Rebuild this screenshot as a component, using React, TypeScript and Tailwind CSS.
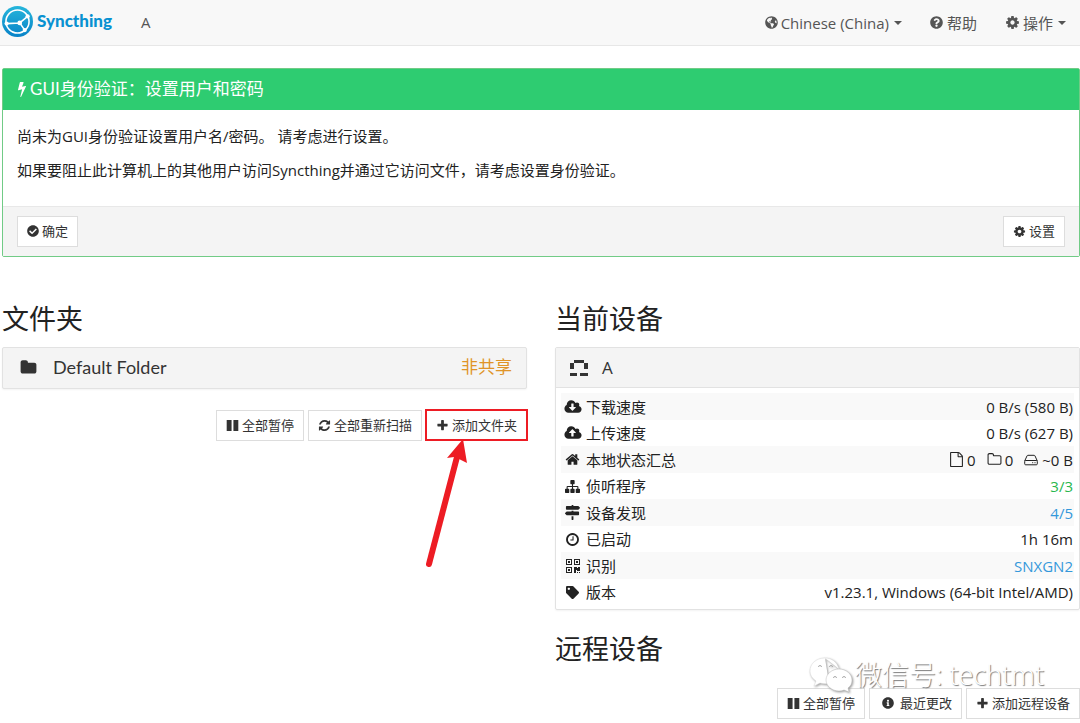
import type { ReactNode } from "react";
import {
  FaCheckCircle,
  FaGlobeAmericas,
  FaInfoCircle,
  FaMapSigns,
  FaQuestionCircle,
  FaTag,
} from "react-icons/fa";

const paths = {
  bolt: "M1333 566q18 20 7 44l-540 1157q-13 25-42 25-4 0-14-2-17-5-25.5-19t-4.5-30l197-808-406 101q-4 1-12 1-18 0-31-11-18-15-13-39l201-825q4-16 18-26t32-10h328q19 0 32 12.5t13 29.5q0 8-5 18l-171 463 396-98q8-2 12-2 19 0 34 15z",
  cog: "M1152 896q0-106-75-181t-181-75-181 75-75 181 75 181 181 75 181-75 75-181zm512-109v222q0 12-8 23t-20 13l-185 28q-19 54-39 91 35 50 107 138 10 12 10 25t-9 23q-27 37-99 108t-94 71q-12 0-26-9l-138-108q-44 23-91 38-16 136-29 186-7 28-36 28h-222q-14 0-24.5-8.5t-11.5-21.5l-28-184q-49-16-90-37l-141 107q-10 9-25 9-14 0-25-11-126-114-165-168-7-10-7-23 0-12 8-23 15-21 51-66.5t54-70.5q-27-50-41-99l-183-27q-13-2-21-12.5t-8-23.5v-222q0-12 8-23t19-13l186-28q14-46 39-92-40-57-107-138-10-12-10-24 0-10 9-23 26-36 98.5-107.5t94.5-71.5q13 0 26 10l138 107q44-23 91-38 16-136 29-186 7-28 36-28h222q14 0 24.5 8.5t11.5 21.5l28 184q49 16 90 37l142-107q9-9 24-9 13 0 25 10 129 119 165 170 7 8 7 22 0 12-8 23-15 21-51 66.5t-54 70.5q26 50 41 98l183 28q13 2 21 12.5t8 23.5z",
  refresh:
    "M1639 1056q0 5-1 7-64 268-268 434.5t-478 166.5q-146 0-282.5-55t-243.5-157l-129 129q-19 19-45 19t-45-19-19-45v-448q0-26 19-45t45-19h448q26 0 45 19t19 45-19 45l-137 137q71 66 161 102t187 36q134 0 250-65t186-179q11-17 53-117 8-23 30-23h192q13 0 22.5 9.5t9.5 22.5zm25-800v448q0 26-19 45t-45 19h-448q-26 0-45-19t-19-45 19-45l138-138q-148-137-349-137-134 0-250 65t-186 179q-11 17-53 117-8 23-30 23h-199q-13 0-22.5-9.5t-9.5-22.5v-7q65-268 270-434.5t480-166.5q146 0 284 55.5t245 156.5l130-129q19-19 45-19t45 19 19 45z",
  folder:
    "M1728 608v704q0 92-66 158t-158 66h-1216q-92 0-158-66t-66-158v-960q0-92 66-158t158-66h320q92 0 158 66t66 158v32h672q92 0 158 66t66 158z",
  folderOutline:
    "M1600 1312v-704q0-40-28-68t-68-28h-704q-40 0-68-28t-28-68v-64q0-40-28-68t-68-28h-320q-40 0-68 28t-28 68v960q0 40 28 68t68 28h1216q40 0 68-28t28-68zm128-704v704q0 92-66 158t-158 66h-1216q-92 0-158-66t-66-158v-960q0-92 66-158t158-66h320q92 0 158 66t66 158v32h672q92 0 158 66t66 158z",
  file: "M1596 380q28 28 48 76t20 88v1152q0 40-28 68t-68 28h-1344q-40 0-68-28t-28-68v-1600q0-40 28-68t68-28h896q40 0 88 20t76 48zm-444-244v376h376q-10-29-22-41l-313-313q-12-12-41-22zm384 1528v-1024h-416q-40 0-68-28t-28-68v-416h-768v1536h1280z",
  clock:
    "M1024 544v448q0 14-9 23t-23 9h-320q-14 0-23-9t-9-23v-64q0-14 9-23t23-9h224v-352q0-14 9-23t23-9h64q14 0 23 9t9 23zm416 352q0-148-73-273t-198-198-273-73-273 73-198 198-73 273 73 273 198 198 273 73 273-73 198-198 73-273zm224 0q0 209-103 385.5t-279.5 279.5-385.5 103-385.5-103-279.5-279.5-103-385.5 103-385.5 279.5-279.5 385.5-103 385.5 103 279.5 279.5 103 385.5z",
  plus: "M1600 736v192q0 40-28 68t-68 28h-416v416q0 40-28 68t-68 28h-192q-40 0-68-28t-28-68v-416h-416q-40 0-68-28t-28-68v-192q0-40 28-68t68-28h416v-416q0-40 28-68t68-28h192q40 0 68 28t28 68v416h416q40 0 68 28t28 68z",
  pause: "M96 128h672v1536h-672zM1024 128h672v1536h-672z",
  home: "M1472 992v480q0 26-19 45t-45 19h-384v-384h-256v384h-384q-26 0-45-19t-19-45v-480q0-1 .5-3t.5-3l575-474 575 474q1 2 1 6zm223-69l-62 74q-8 9-21 11h-3q-13 0-21-7l-692-577-692 577q-12 8-24 7-13-2-21-11l-62-74q-8-10-7-23.5t11-21.5l719-599q32-26 76-26t76 26l244 204v-195q0-14 9-23t23-9h192q14 0 23 9t9 23v408l219 182q10 8 11 21.5t-7 23.5z",
  sitemap:
    "M1792 1248v320q0 40-28 68t-68 28h-320q-40 0-68-28t-28-68v-320q0-40 28-68t68-28h96v-192h-512v192h96q40 0 68 28t28 68v320q0 40-28 68t-68 28h-320q-40 0-68-28t-28-68v-320q0-40 28-68t68-28h96v-192h-512v192h96q40 0 68 28t28 68v320q0 40-28 68t-68 28h-320q-40 0-68-28t-28-68v-320q0-40 28-68t68-28h96v-192q0-52 38-90t90-38h512v-192h-96q-40 0-68-28t-28-68v-320q0-40 28-68t68-28h320q40 0 68 28t28 68v320q0 40-28 68t-68 28h-96v192h512q52 0 90 38t38 90v192h96q40 0 68 28t28 68z",
  download:
    "M1216 928q0-14-9-23t-23-9h-224v-352q0-13-9.5-22.5t-22.5-9.5h-192q-13 0-22.5 9.5t-9.5 22.5v352h-224q-13 0-22.5 9.5t-9.5 22.5q0 14 9 23l352 352q9 9 23 9t23-9l351-351q10-12 10-24zm640 224q0 159-112.5 271.5t-271.5 112.5h-1088q-185 0-316.5-131.5t-131.5-316.5q0-130 70-240t188-165q-2-30-2-43 0-212 150-362t362-150q156 0 285.5 87t188.5 231q71-62 166-62 106 0 181 75t75 181q0 76-41 138 130 31 213.5 135.5t83.5 238.5z",
  upload:
    "M1216 864q0-14-9-23l-352-352q-9-9-23-9t-23 9l-351 351q-10 12-10 24 0 14 9 23t23 9h224v352q0 13 9.5 22.5t22.5 9.5h192q13 0 22.5-9.5t9.5-22.5v-352h224q13 0 22.5-9.5t9.5-22.5zm640 288q0 159-112.5 271.5t-271.5 112.5h-1088q-185 0-316.5-131.5t-131.5-316.5q0-130 70-240t188-165q-2-30-2-43 0-212 150-362t362-150q156 0 285.5 87t188.5 231q71-62 166-62 106 0 181 75t75 181q0 76-41 138 130 31 213.5 135.5t83.5 238.5z",
};

interface IconProps {
  name: keyof typeof paths;
  className?: string;
}

const Icon = ({ name, className = "size-[13px]" }: IconProps) => (
  <svg
    viewBox="0 0 1792 1792"
    fill="currentColor"
    overflow="visible"
    className={`shrink-0 ${className}`}
    aria-hidden="true"
  >
    <path d={paths[name]} />
  </svg>
);

const QrIcon = () => (
  <svg viewBox="0 0 14 14" className="size-[14px]" fill="currentColor" aria-hidden="true">
    <path
      fillRule="evenodd"
      d="M0 0h6v6H0zM1 1v4h4V1zM8 0h6v6H8zM9 1v4h4V1zM0 8h6v6H0zM1 9v4h4V9z"
    />
    <path d="M2 2h2v2H2zM10 2h2v2h-2zM2 10h2v2H2zM8 8h3v1h1V8h2v4h-3v-1h-1v3H8zM11 13h1v1h-1zM13 13h1v1h-1z" />
  </svg>
);

const DriveIcon = () => (
  <svg
    viewBox="0 0 14 14"
    className="size-[14px]"
    fill="none"
    stroke="currentColor"
    strokeLinejoin="round"
    aria-hidden="true"
  >
    <path d="M.7 8 3 2.9q.3-.6 1-.6h6q.7 0 1 .6L13.3 8M1.7 7.5h10.6q1 0 1 1v2.300q0 1-1 1H1.700q-1 0-1-1V8.500q0-1 1-1z" />
    <path d="M8.200 9.700h1M10.500 9.700h1" />
  </svg>
);

const Identicon = () => (
  <svg viewBox="0 0 18 18" className="size-[18px]" fill="currentColor" aria-hidden="true">
    <path d="M4 1h10v3H4zM0 4h4v6H0zM14 4h4v6h-4zM0 14h7v3H0zM10 14h8v3h-8z" />
  </svg>
);

const Logo = () => (
  <svg viewBox="0 0 118 118" className="size-[31px]" aria-hidden="true">
    <defs>
      <linearGradient id="logo" x1="0" y1="1" x2="0" y2="0">
        <stop offset="0" stopColor="#0882c8" />
        <stop offset="1" stopColor="#26b6db" />
      </linearGradient>
    </defs>
    <circle cx="59" cy="59" r="59" fill="url(#logo)" />
    <g fill="none" stroke="#fff" strokeWidth="6">
      <circle cx="59" cy="59" r="44" />
      <path d="M97.600 39.400 67.500 64.400 86.500 91.800M67.500 64.400 17.500 67" />
    </g>
    <g fill="#fff">
      <circle cx="97.600" cy="39.400" r="8" />
      <circle cx="86.500" cy="91.800" r="8" />
      <circle cx="17.500" cy="67" r="8" />
      <circle cx="67.500" cy="64.400" r="9" />
    </g>
  </svg>
);

const Caret = () => (
  <span className="ml-0.5 border-x-4 border-t-4 border-x-transparent border-t-current" />
);

interface ButtonProps {
  icon: ReactNode;
  children: ReactNode;
}

const Button = ({ icon, children }: ButtonProps) => (
  <button
    type="button"
    className="flex h-[31px] items-center gap-[3px] border border-[#ddd] bg-white px-[9px] pb-px text-[13px] whitespace-nowrap text-[#333]"
  >
    {icon}
    {children}
  </button>
);

interface RowProps {
  icon: ReactNode;
  label: string;
  children: ReactNode;
}

const Row = ({ icon, label, children }: RowProps) => (
  <tr className="odd:h-[27px] odd:bg-[#f9f9f9] even:h-[26px]">
    <th scope="row" className="pl-[3px] text-left font-normal">
      <span className="flex items-center gap-[5px]">
        <span className="flex w-[17px] justify-center">{icon}</span>
        {label}
      </span>
    </th>
    <td className="pr-px text-right">{children}</td>
  </tr>
);

const Navbar = () => (
  <nav className="flex h-[46px] items-center justify-between border-b border-[#e7e7e7] bg-[#f8f8f8] pr-[14px] pl-0.5 text-[#555]">
    <div className="flex items-center pb-[3px]">
      <a
        href="#"
        className="flex items-center gap-1 font-[Lato,sans-serif] text-[17px] font-black text-[#0891d1]"
      >
        <Logo />
        Syncthing
      </a>
      <span className="ml-[29px] pt-0.5">A</span>
    </div>
    <div className="flex items-center gap-7">
      <button type="button" className="flex items-center gap-[3px]">
        <FaGlobeAmericas className="size-[13px]" />
        Chinese (China)
        <Caret />
      </button>
      <a href="#help" className="flex items-center gap-1">
        <FaQuestionCircle className="size-[13px]" />
        帮助
      </a>
      <button type="button" className="flex items-center gap-[3px]">
        <Icon name="cog" className="size-[15px]" />
        操作
        <Caret />
      </button>
    </div>
  </nav>
);

const AuthNotice = () => (
  <section className="mt-[22px] rounded-xs border border-[#71cb86]">
    <h3 className="flex h-[41px] items-center bg-[#2ecc71] px-[11px] pb-0.5 font-[Lato,'Noto_Sans_CJK_SC',sans-serif] text-[17px] text-white">
      <Icon name="bolt" className="size-4" />
      GUI身份验证：设置用户和密码
    </h3>
    <div className="flex flex-col gap-3 px-[14px] pt-[15px] pb-[25px] leading-[22px]">
      <p>尚未为GUI身份验证设置用户名/密码。 请考虑进行设置。</p>
      <p>如果要阻止此计算机上的其他用户访问Syncthing并通过它访问文件，请考虑设置身份验证。</p>
    </div>
    <div className="flex justify-between border-t border-[#e8e8e8] bg-[#f4f4f4] px-[14px] py-[9px]">
      <Button icon={<FaCheckCircle className="size-[12px]" />}>确定</Button>
      <Button icon={<Icon name="cog" />}>设置</Button>
    </div>
  </section>
);

const Folders = () => (
  <section>
    <h2 className="text-[27px] leading-9">文件夹</h2>
    <button
      type="button"
      className="mt-[10px] flex h-[42px] w-full items-center rounded-xs border border-[#e2e2e2] bg-[#f4f4f4] px-[14px] pb-0.5 font-[Lato,'Noto_Sans_CJK_SC',sans-serif] text-[17px] text-[#333] shadow-xs"
    >
      <Icon name="folder" className="mx-[3px] size-[17px]" />
      <span className="ml-[13px] text-[18px]">Default Folder</span>
      <span className="ml-auto text-[#e09428]">非共享</span>
    </button>
    <div className="mt-[21px] flex justify-end gap-1">
      <Button icon={<Icon name="pause" />}>全部暂停</Button>
      <Button icon={<Icon name="refresh" />}>全部重新扫描</Button>
      <div className="relative">
        <Button icon={<Icon name="plus" />}>添加文件夹</Button>
        <span className="pointer-events-none absolute -inset-x-px -top-px bottom-0 border-2 border-[#ed1c24]" />
        <svg
          viewBox="0 0 44 130"
          className="pointer-events-none absolute top-full left-0 h-[130px] w-[44px]"
          aria-hidden="true"
        >
          <path d="M3 123 31 16" stroke="#ed1c24" strokeWidth="6" strokeLinecap="round" />
          <path d="M37-2 41 22 33 18 28 16 21 17Z" fill="#ed1c24" />
        </svg>
      </div>
    </div>
  </section>
);

const Devices = () => (
  <section>
    <h2 className="text-[27px] leading-9">当前设备</h2>
    <div className="mt-[10px] rounded-xs border border-[#e2e2e2] shadow-xs">
      <button
        type="button"
        className="flex h-[40px] w-full items-center gap-[14px] border-b border-[#e2e2e2] bg-[#f4f4f4] px-[14px] text-[17px] text-[#333]"
      >
        <Identicon />A
      </button>
      <div className="px-[5px] pt-[5px] pb-1">
        <table className="w-full">
          <tbody>
            <Row icon={<Icon name="download" className="size-[16px]" />} label="下载速度">
              0 B/s (580 B)
            </Row>
            <Row icon={<Icon name="upload" className="size-[16px]" />} label="上传速度">
              0 B/s (627 B)
            </Row>
            <Row icon={<Icon name="home" className="size-[15px]" />} label="本地状态汇总">
              <span className="flex items-center justify-end gap-[11px]">
                <span className="flex items-center gap-[3px]">
                  <Icon name="file" className="size-[15px]" />0
                </span>
                <span className="flex items-center gap-[3px]">
                  <Icon name="folderOutline" className="size-[15px]" />0
                </span>
                <span className="flex items-center gap-1">
                  <DriveIcon />
                  ~0 B
                </span>
              </span>
            </Row>
            <Row icon={<Icon name="sitemap" className="size-[15px]" />} label="侦听程序">
              <span className="text-[#29b74e]">3/3</span>
            </Row>
            <Row icon={<FaMapSigns className="size-[15px]" />} label="设备发现">
              <a href="#discovery" className="text-[#3498db]">
                4/5
              </a>
            </Row>
            <Row icon={<Icon name="clock" className="size-[15px]" />} label="已启动">
              1h 16m
            </Row>
            <Row icon={<QrIcon />} label="识别">
              <a href="#id" className="text-[#3498db]">
                SNXGN2
              </a>
            </Row>
            <Row icon={<FaTag className="size-[13px]" />} label="版本">
              v1.23.1, Windows (64-bit Intel/AMD)
            </Row>
          </tbody>
        </table>
      </div>
    </div>
    <h2 className="mt-[21px] text-[27px] leading-9">远程设备</h2>
    <div className="relative mt-[21px] flex justify-end gap-1">
      <Button icon={<Icon name="pause" />}>全部暂停</Button>
      <Button icon={<FaInfoCircle className="mx-[3px] size-[12px]" />}>最近更改</Button>
      <Button icon={<Icon name="plus" />}>添加远程设备</Button>
      <Watermark />
    </div>
  </section>
);

const Watermark = () => (
  <div className="pointer-events-none absolute right-[36px] bottom-[25px] flex items-center gap-0.5 text-[27px] leading-9 font-light whitespace-nowrap text-white [text-shadow:1px_1px_1px_#777]">
    <svg
      viewBox="0 0 44 38"
      className="h-[38px] w-[44px] drop-shadow-[1px_1px_1px_#999]"
      fill="#fff"
      aria-hidden="true"
    >
      <path
        stroke="#ddd"
        strokeWidth=".5"
        d="M16 2C7 2 1 8 1 15c0 4 2 7 6 10l-2 5 6-3c3 1 7 1 9 0M30 13C28 6 23 2 16 2"
      />
      <path
        stroke="#bbb"
        strokeWidth=".5"
        d="M30 13c-7 0-13 5-13 11s6 11 13 11q3 0 5-1l5 2-1-4c3-2 4-5 4-8 0-6-6-11-13-11z"
      />
      <g fill="none" stroke="#999" strokeWidth=".8">
        <path d="M9.500 11a1.500 1.500 0 0 1 3 0M20.500 11a1.500 1.500 0 0 1 3 0M24.500 22a1.500 1.500 0 0 1 3 0M33.500 22a1.500 1.500 0 0 1 3 0" />
      </g>
    </svg>
    微信号: techtmt
  </div>
);

const App = () => (
  <div className="bg-white font-['Open_Sans','Noto_Sans_CJK_SC',sans-serif] text-[15px] leading-[22px] text-[#222]">
    <Navbar />
    <main className="pb-1 pl-0.5">
      <AuthNotice />
      <div className="mt-11 grid grid-cols-2 gap-7">
        <Folders />
        <Devices />
      </div>
    </main>
  </div>
);

export default App;
